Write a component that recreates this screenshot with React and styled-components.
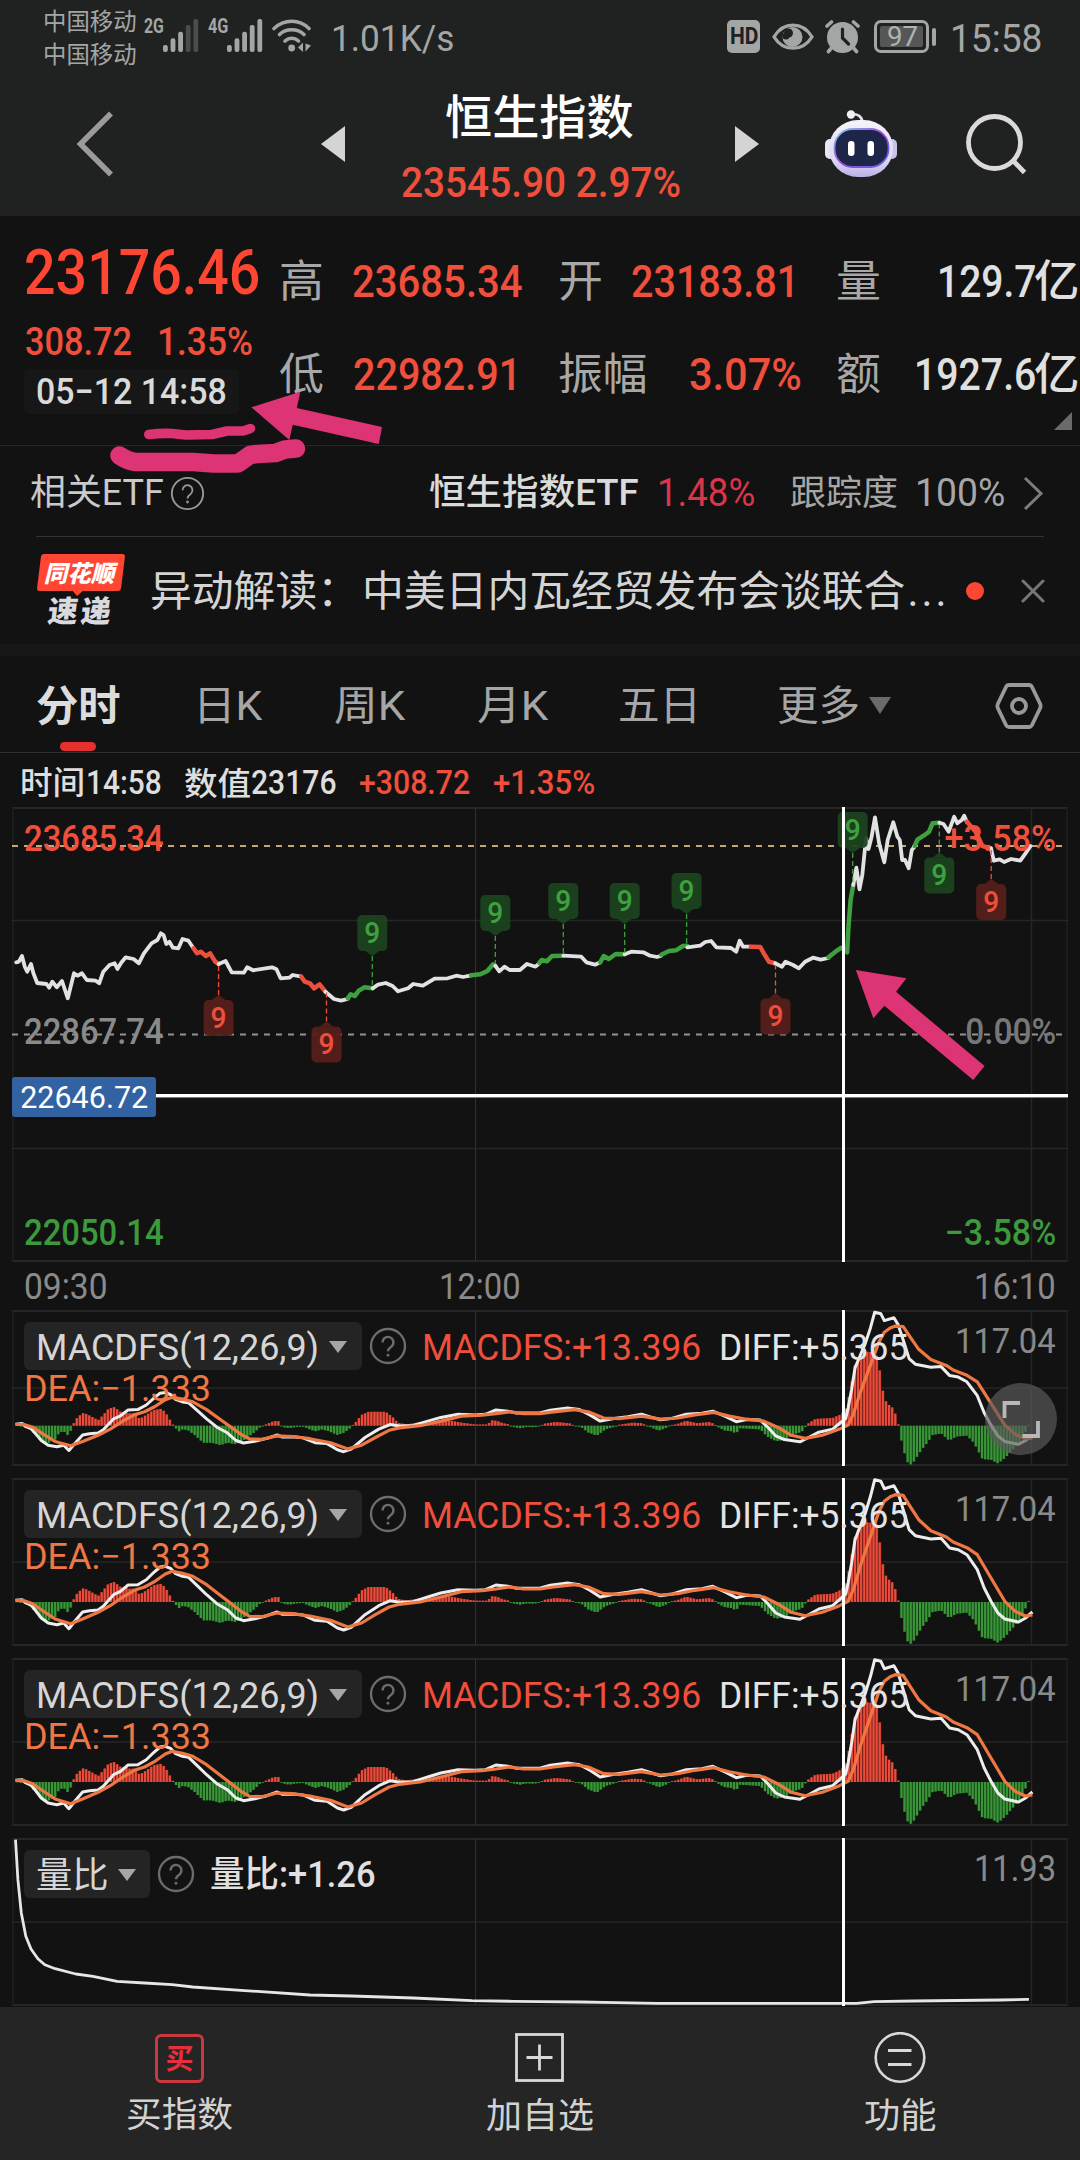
import React, { useLayoutEffect, useRef, useState } from "react";
import styled, { createGlobalStyle } from "styled-components";

const RED = "#f04f3c";
const GREEN = "#3c9a3c";
const PINK = "#dc3474";
const FONT = `Roboto, "Noto Sans CJK SC", sans-serif`;

const GlobalStyle = createGlobalStyle`
  * {
    box-sizing: border-box;
  }
  body {
    margin: 0;
    background: #121212;
    font-family: ${FONT};
  }
  svg {
    display: block;
    flex: none;
  }
`;

const Page = styled.div`
  position: relative;
  width: 1080px;
  height: 2160px;
  overflow: hidden;
  display: flex;
  flex-direction: column;
  background: #121212;
`;

/* ---------- text fitted to a given width ---------- */

const FitBox = styled.span`
  display: block;
  flex: none;
  width: ${(p) => p.$w + p.$size * 0.1}px;
  margin-left: ${(p) => (p.$ml || 0) - p.$size * 0.05}px;
  margin-right: ${(p) => (p.$mr || 0) - p.$size * 0.05}px;
  margin-top: ${(p) => p.$mt || 0}px;
  color: ${(p) => p.$color};
  font-size: ${(p) => p.$size}px;
  font-weight: ${(p) => p.$weight};
  line-height: 1.2;
  white-space: pre;
`;

const FitInner = styled.span`
  display: inline-block;
  transform-origin: 0 50%;
`;

function Fit({ w, size, weight = 500, color = RED, ml, mr, mt, children }) {
  const ref = useRef(null);
  const [scale, setScale] = useState(1);

  useLayoutEffect(() => {
    setScale((w + size * 0.1) / ref.current.offsetWidth);
  }, [w, size, children]);

  return (
    <FitBox
      $w={w}
      $size={size}
      $weight={weight}
      $color={color}
      $ml={ml}
      $mr={mr}
      $mt={mt}
    >
      <FitInner ref={ref} style={{ transform: `scaleX(${scale})` }}>
        {children}
      </FitInner>
    </FitBox>
  );
}

/* ---------- header ---------- */

const Header = styled.header`
  height: 216px;
  flex: none;
  background: #202221;
`;

const StatusBar = styled.div`
  height: 74px;
  display: flex;
  align-items: flex-start;
  padding-left: 43px;
`;

const Carriers = styled.div`
  width: 102px;
  padding-top: 6px;
  color: #a4a6a5;
  font-size: 23.4px;
  line-height: 33px;
  white-space: nowrap;
`;

const StatusIcon = styled.svg`
  margin-left: ${(p) => p.$ml || 0}px;
  margin-top: 19px;
`;

const HdBadge = styled.div`
  width: 33px;
  height: 33px;
  margin: 20px 0 0 275px;
  border-radius: 5px;
  background: #a4a6a5;
  display: flex;
  align-items: center;
  justify-content: center;
`;

const Battery = styled.div`
  width: 55px;
  height: 33px;
  margin: 20px 0 0 13px;
  padding: 3px;
  border: 3px solid #a4a6a5;
  border-radius: 7px;
`;

const BatteryLevel = styled.div`
  height: 21px;
  border-radius: 2px;
  background: #555656;
  display: flex;
  align-items: center;
  justify-content: center;
`;

const BatteryNub = styled.div`
  width: 4px;
  height: 18px;
  margin: 27.5px 15px 0 3px;
  border-radius: 2px;
  background: #a4a6a5;
`;

const Nav = styled.nav`
  height: 142px;
  display: flex;
  align-items: center;
  padding: 0 0 2px 76px;
`;

const NavIcon = styled.svg`
  margin-left: ${(p) => p.$ml || 0}px;
`;

const TitleBlock = styled.div`
  width: 276px;
  margin-left: 58px;
  padding-top: 14px;
  display: flex;
  flex-direction: column;
  align-items: center;
`;

const TitleLine = styled.div`
  height: 63.5px;
  display: flex;
  align-items: center;
`;

/* ---------- quote ---------- */

const Quote = styled.section`
  position: relative;
  height: 230px;
  flex: none;
  display: flex;
  border-bottom: 1px solid #262626;
`;

const QuoteMain = styled.div`
  width: 281px;
  padding-top: 5px;
`;

const PriceLine = styled.div`
  height: ${(p) => p.$h}px;
  padding-left: 27px;
  display: flex;
  align-items: center;
`;

const DateTag = styled.div`
  width: 215px;
  height: 45px;
  margin: 9px 0 0 24px;
  padding-left: 14px;
  border-radius: 6px;
  background: #171717;
  display: flex;
  align-items: center;
`;

const StatGrid = styled.div`
  padding-top: 19px;
  display: grid;
  grid-template-columns: 240px 239px 239px;
  grid-auto-rows: 93px;
  column-gap: 39px;
`;

const Stat = styled.div`
  display: flex;
  align-items: center;
  justify-content: space-between;
`;

const StatValue = styled.div`
  display: flex;
  align-items: center;
`;

const Corner = styled.i`
  position: absolute;
  right: 8px;
  bottom: 15px;
  border-left: 18px solid transparent;
  border-bottom: 18px solid #6a6a6a;
`;

/* ---------- etf + news ---------- */

const EtfRow = styled.section`
  height: 90px;
  flex: none;
  display: flex;
  align-items: center;
  padding: 5px 0 0 32px;
`;

const Divider = styled.div`
  height: 1px;
  flex: none;
  margin: 0 36px;
  background: #333;
`;

const NewsRow = styled.section`
  height: 107px;
  flex: none;
  display: flex;
  align-items: center;
  padding-left: 37px;
`;

const Badge = styled.div`
  width: 88px;
  height: 74px;
  display: flex;
  flex-direction: column;
  align-items: center;
`;

const BadgeTop = styled.div`
  position: relative;
  width: 84px;
  height: 37px;
  flex: none;
  border-radius: 3px;
  background: #ff4632;
  transform: skewX(-7deg);
  display: flex;
  align-items: center;
  justify-content: center;

  &::after {
    content: "";
    position: absolute;
    top: 36px;
    left: 35px;
    border: 6px solid transparent;
    border-top-color: #ff4632;
  }
`;

const BadgeText = styled.span`
  margin-top: ${(p) => p.$mt || 0}px;
  color: ${(p) => p.$color || "#fff"};
  font-size: ${(p) => p.$size}px;
  font-weight: 900;
  line-height: 34px;
  letter-spacing: ${(p) => p.$gap || 0}px;
  transform: skewX(-7deg);
`;

const NewsText = styled.p`
  width: 808px;
  flex: none;
  margin: 3px 0 0 25px;
  color: #d4d4d4;
  font-size: 41.8px;
  line-height: 60px;
  white-space: nowrap;
`;

const Headline = styled.span`
  margin-left: 3px;
`;

const Dots = styled.span`
  margin-left: 2px;
  letter-spacing: 3px;
`;

const RedDot = styled.i`
  width: 18px;
  height: 18px;
  flex: none;
  margin: 0 37px 0 8px;
  border-radius: 50%;
  background: #ff4632;
`;

const Band = styled.div`
  height: 12px;
  flex: none;
  background: #171717;
`;

/* ---------- tabs ---------- */

const Tabs = styled.section`
  height: 97px;
  flex: none;
  display: flex;
  align-items: center;
  padding: 5px 0 0 38px;
  border-bottom: 1px solid #303030;
`;

const Tab = styled.div`
  position: relative;
  display: flex;
  align-items: center;
  margin-left: ${(p) => p.$ml || 0}px;

  &::after {
    content: "";
    display: ${(p) => (p.$active ? "block" : "none")};
    position: absolute;
    top: 61px;
    left: 22px;
    width: 36px;
    height: 9px;
    border-radius: 5px;
    background: #e5302f;
  }
`;

const Caret = styled.i`
  margin-left: ${(p) => p.$ml}px;
  margin-bottom: 3px;
  border: solid transparent;
  border-width: ${(p) => p.$h}px ${(p) => p.$half}px 0;
  border-top-color: ${(p) => p.$color};
`;

const InfoRow = styled.section`
  height: 54px;
  flex: none;
  display: flex;
  align-items: center;
  padding: 7px 0 0 22px;
`;

/* ---------- charts ---------- */

const MainChart = styled.svg`
  width: 1080px;
  height: 455px;
`;

const TimeAxis = styled.div`
  height: 48px;
  flex: none;
  display: flex;
  align-items: center;
  padding: 2px 0 0 26px;
`;

const Panel = styled.section`
  flex: none;
  height: ${(p) => p.$h}px;
  margin-bottom: 12px;
  display: grid;
  grid-template: 1fr / 1fr;

  & > * {
    grid-area: 1 / 1;
  }
`;

const Legend = styled.div`
  padding: 12px 25px 0 24px;
`;

const LegendRow = styled.div`
  height: 48px;
  display: flex;
  align-items: center;
`;

const Selector = styled.div`
  width: ${(p) => p.$w}px;
  height: 48px;
  padding: 4px 0 0 14px;
  border-radius: 6px;
  background: #242424;
  display: flex;
  align-items: center;
`;

const PanelMax = styled.div`
  margin: -9px 1px 0 auto;
`;

const ExpandButton = styled.button`
  position: absolute;
  left: 985px;
  top: 1383px;
  width: 72px;
  height: 72px;
  padding: 0;
  border: 0;
  border-radius: 50%;
  background: rgba(92, 92, 92, 0.68);
`;

const Overlay = styled.svg`
  position: absolute;
  left: 0;
  top: 0;
  pointer-events: none;
`;

/* ---------- bottom bar ---------- */

const BottomBar = styled.footer`
  position: absolute;
  left: 0;
  right: 0;
  bottom: 0;
  height: 153px;
  background: #252525;
  display: grid;
  grid-template-columns: repeat(3, 1fr);
`;

const Action = styled.div`
  display: flex;
  flex-direction: column;
  align-items: center;
  padding-top: 25px;
`;

const ActionIcon = styled.div`
  height: 52px;
  margin-bottom: 11px;
`;

const BuyIcon = styled.div`
  width: 49px;
  height: 49px;
  margin: 2px 1px 0 0;
  border: 3px solid #c9393f;
  border-radius: 6px;
  color: #e5303f;
  font-size: 28px;
  font-weight: 700;
  line-height: 45px;
  text-align: center;
`;

/* ---------- data ---------- */

// points are stored on a fine grid: 2.904 units per px across, 3 units per px down
const UX = 2.904;
const path = (pts, y0) =>
  pts
    .map(([x, y], i) => `${i ? "L" : "M"}${(x / UX).toFixed(1)} ${(y0 + y / 3).toFixed(1)}`)
    .join("");

const PRICE = [
  ["w", [[47,487],[55,485],[64,468],[72,500],[79,515],[90,492],[97,520],[108,549],[135,552],[143,563],[152,545],[165,562],[180,543],[197,595],[215,520],[225,527],[238,520],[252,540],[278,542],[288,550],[300,515],[318,495],[333,490],[341,507],[352,488],[365,472],[388,477],[403,490],[418,460],[440,430],[457,420],[467,400],[475,405],[483,432],[492,425],[502,443],[518,445],[530,417],[547,422],[562,445]]],
  ["r", [[562,445],[572,460],[583,455],[598,468],[610,460],[625,485],[635,492]]],
  ["w", [[635,492],[655,483],[673,517],[708,518],[718,502],[735,511],[790,502],[803,508],[815,535],[840,533],[850,525],[875,530]]],
  ["r", [[875,530],[885,545],[900,550],[912,565],[928,553],[945,575]]],
  ["w", [[945,575],[970,597],[990,602],[1010,597]]],
  ["g", [[1010,595],[1018,583],[1030,588],[1042,572],[1058,562],[1082,565]]],
  ["w", [[1082,565],[1098,554],[1120,549],[1140,558],[1156,574],[1185,565],[1200,552],[1228,557],[1262,536],[1300,535],[1325,527],[1345,531],[1368,526]]],
  ["g", [[1368,526],[1395,523],[1415,513],[1432,493],[1438,497]]],
  ["w", [[1438,497],[1450,514],[1465,500],[1480,510],[1510,510],[1530,492],[1555,500],[1566,490]]],
  ["g", [[1566,488],[1573,480],[1588,484],[1603,468],[1636,467]]],
  ["w", [[1636,467],[1688,470],[1703,487],[1728,494],[1743,487]]],
  ["g", [[1743,487],[1753,468],[1768,477],[1788,462],[1814,463]]],
  ["w", [[1814,463],[1833,455],[1868,457],[1888,467],[1908,471],[1920,467]]],
  ["g", [[1920,464],[1943,453],[1963,451],[1983,438],[1996,437]]],
  ["w", [[1996,442],[2033,437],[2048,426],[2065,423],[2080,442],[2123,444],[2138,455],[2148,422],[2158,440],[2180,440]]],
  ["r", [[2180,440],[2208,441],[2218,460],[2233,485],[2251,490]]],
  ["w", [[2251,490],[2271,500],[2281,485],[2303,495],[2320,505],[2338,485],[2361,473],[2383,479],[2406,474]]],
  ["g", [[2406,472],[2426,455],[2443,443],[2460,457],[2464,380],[2470,300],[2478,255]]],
  ["w", [[2478,255],[2487,203],[2496,268],[2504,225],[2515,115],[2522,147],[2531,110],[2541,52],[2553,130],[2568,187],[2578,120],[2594,67],[2606,110],[2613,120],[2620,180],[2628,180],[2639,205],[2648,150],[2656,140]]],
  ["g", [[2656,138],[2665,118],[2688,103],[2698,95],[2708,70],[2728,68]]],
  ["w", [[2728,68],[2740,72],[2755,95],[2771,50],[2780,70],[2793,60],[2800,47],[2808,66]]],
  ["r", [[2808,65],[2833,95],[2853,138],[2878,145]]],
  ["w", [[2878,145],[2886,182],[2903,178],[2916,186],[2936,177],[2963,182],[2978,160],[2993,138]]],
];

const LINE_COLOR = { w: "#e2e2e2", r: "#ee4f3c", g: "#3fa03f" };

// x, tip y, line end y, up = box above the tip
const MARKERS = [
  { x: 372.3, tip: 956, end: 986, up: true, c: "g" },
  { x: 495.3, tip: 936, end: 963, up: true, c: "g" },
  { x: 563.3, tip: 924, end: 954, up: true, c: "g" },
  { x: 624.7, tip: 924, end: 953, up: true, c: "g" },
  { x: 686.6, tip: 914, end: 944, up: true, c: "g" },
  { x: 852.7, tip: 853, end: 885, up: true, c: "g" },
  { x: 939.3, tip: 852.5, end: 825, up: false, c: "g" },
  { x: 218.6, tip: 995, end: 965, up: false, c: "r" },
  { x: 326.5, tip: 1021.5, end: 992, up: false, c: "r" },
  { x: 775.5, tip: 993.5, end: 966, up: false, c: "r" },
  { x: 991.2, tip: 879, end: 850, up: false, c: "r" },
];

const DIFF = [[45,-5],[65,-7],[72,1],[90,9],[105,28],[120,48],[140,63],[165,68],[185,63],[200,80],[215,61],[240,30],[260,26],[285,24],[300,13],[330,-22],[350,-32],[372,-51],[400,-52],[425,-67],[447,-89],[465,-105],[480,-107],[495,-101],[510,-85],[530,-77],[548,-74],[575,-47],[600,-22],[630,5],[660,23],[685,48],[707,56],[740,50],[775,41],[805,30],[820,37],[850,36],[880,39],[915,55],[950,58],[980,78],[998,84],[1020,76],[1060,38],[1100,11],[1133,-4],[1160,1],[1200,-1],[1240,-14],[1280,-27],[1330,-37],[1380,-35],[1410,-37],[1440,-51],[1475,-47],[1500,-41],[1568,-41],[1598,-50],[1648,-57],[1683,-52],[1713,-35],[1743,-15],[1783,-23],[1823,-29],[1863,-37],[1893,-27],[1918,-19],[1953,-24],[1993,-37],[2038,-40],[2070,-47],[2108,-29],[2138,-13],[2168,-20],[2208,-18],[2228,3],[2253,33],[2278,45],[2323,52],[2348,38],[2378,21],[2418,11],[2438,-7],[2456,-24],[2463,-57],[2473,-117],[2483,-187],[2498,-227],[2513,-267],[2528,-317],[2540,-367],[2558,-362],[2568,-340],[2596,-349],[2608,-327],[2623,-277],[2640,-217],[2658,-199],[2703,-189],[2733,-191],[2758,-162],[2783,-157],[2808,-142],[2838,-97],[2858,-42],[2878,-2],[2898,33],[2918,51],[2958,60],[2978,48],[2998,30]];
const DEA = [[45,-4],[70,-4],[95,5],[120,23],[160,51],[205,65],[240,51],[285,31],[320,11],[360,-17],[390,-35],[420,-45],[450,-62],[480,-84],[500,-92],[530,-86],[560,-77],[600,-52],[650,-12],[700,28],[725,43],[760,44],[805,33],[850,35],[900,42],[960,55],[1010,75],[1050,63],[1090,38],[1130,15],[1160,7],[1220,0],[1280,-15],[1340,-31],[1400,-34],[1440,-39],[1480,-45],[1520,-39],[1568,-39],[1608,-45],[1668,-52],[1708,-45],[1753,-25],[1798,-23],[1863,-31],[1918,-21],[1968,-25],[2018,-35],[2073,-43],[2118,-31],[2168,-21],[2218,-15],[2258,5],[2298,31],[2338,41],[2388,31],[2438,11],[2463,-2],[2478,-37],[2498,-107],[2518,-167],[2538,-227],[2553,-272],[2568,-302],[2585,-316],[2600,-322],[2623,-320],[2643,-287],[2668,-247],[2703,-214],[2748,-195],[2768,-180],[2808,-163],[2838,-142],[2878,-72],[2918,-2],[2948,28],[2978,42],[2998,39]];
const HIST = [[60,0],[75,-3],[90,-15],[105,-33],[120,-52],[140,-56],[160,-45],[172,-22],[185,-18],[198,-32],[208,-10],[214,8],[225,28],[243,42],[265,30],[285,18],[300,35],[315,55],[332,60],[350,45],[375,40],[392,40],[405,22],[425,35],[445,50],[470,55],[485,35],[497,12],[503,2],[510,-8],[520,-18],[530,-12],[545,-14],[565,-30],[590,-55],[615,-55],[640,-63],[660,-55],[685,-60],[710,-45],[740,-20],[757,-3],[770,3],[795,15],[808,15],[815,0],[820,-4],[840,-8],[860,-4],[880,-3],[900,-12],[915,-18],[935,-12],[955,-18],[980,-30],[1000,-22],[1020,-5],[1030,8],[1050,35],[1070,45],[1120,45],[1140,28],[1155,10],[1180,4],[1210,10],[1240,8],[1260,12],[1300,18],[1340,10],[1380,4],[1415,4],[1430,18],[1445,15],[1460,8],[1475,5],[1485,-3],[1510,-8],[1530,-4],[1550,-5],[1568,-2],[1578,6],[1613,12],[1653,8],[1668,0],[1688,-5],[1708,-22],[1733,-32],[1758,-12],[1783,-4],[1798,3],[1838,10],[1863,8],[1883,-2],[1913,-16],[1933,-8],[1946,0],[1968,6],[1993,16],[2023,8],[2063,12],[2076,3],[2083,-3],[2103,-15],[2123,-18],[2138,-25],[2148,-8],[2178,-10],[2208,-12],[2228,-35],[2253,-50],[2278,-46],[2303,-28],[2328,-20],[2340,-2],[2348,8],[2368,22],[2418,25],[2438,35],[2450,45],[2458,60],[2468,110],[2478,170],[2486,215],[2498,220],[2513,240],[2528,238],[2543,235],[2551,210],[2558,150],[2568,85],[2583,65],[2596,55],[2604,20],[2610,0],[2618,-50],[2628,-95],[2638,-125],[2648,-125],[2663,-100],[2678,-75],[2693,-55],[2708,-30],[2733,-25],[2756,-48],[2778,-35],[2808,-32],[2828,-55],[2853,-108],[2878,-110],[2898,-122],[2918,-105],[2943,-75],[2968,-45],[2983,-5],[2990,8],[2998,18]];
const RATIO = [[45,5],[52,125],[62,225],[75,295],[90,333],[110,362],[130,380],[160,392],[220,408],[270,415],[340,430],[420,435],[500,440],[560,447],[700,457],[900,471],[1020,474],[1200,480],[1370,488],[1490,490],[1568,491],[1688,492],[1790,494],[1908,496],[2488,496],[2538,491],[2653,489],[2908,486],[2988,484]];

function histAt(x) {
  const i = HIST.findIndex((p) => p[0] >= x);
  if (i < 1) return 0;
  const [x0, v0] = HIST[i - 1];
  const [x1, v1] = HIST[i];
  return v0 + ((v1 - v0) * (x - x0)) / (x1 - x0);
}

// one bar per trading minute
const BARS = Array.from({ length: 326 }, (_, i) => {
  const x = 21 + i * 3.1;
  return { x, v: histAt(x * UX) / 3 };
}).filter((b) => b.x < 1033);

/* ---------- small drawings ---------- */

function Help({ r, ml, color, width }) {
  const s = r * 2 + 4;
  return (
    <NavIcon $ml={ml} width={s} height={s} viewBox="0 0 38 38" fill="none" stroke={color}>
      <circle cx="19" cy="19" r="17" strokeWidth={width} />
      <path d="M13.6 15.5a5.4 5.4 0 1 1 8.6 4.2c-2 1.4-3.2 2.3-3.2 4.6" strokeWidth={width} />
      <circle cx="19" cy="28.2" r="1.1" fill={color} strokeWidth="1" />
    </NavIcon>
  );
}

function Signal({ weak }) {
  const tops = [26, 19.3, 12.7, 6, 0];
  return (
    <StatusIcon width="36" height="33">
      {tops.map((y, i) => (
        <rect
          key={y}
          x={i * 7.6}
          y={y}
          width="4.8"
          height={33 - y}
          rx="2"
          fill={weak && i > 2 ? "#4b4c4c" : "#a4a6a5"}
        />
      ))}
    </StatusIcon>
  );
}

function Wifi() {
  return (
    <StatusIcon $ml={9} width="42" height="34" viewBox="0 0 42 34" fill="none" stroke="#a4a6a5" strokeWidth="3.6" strokeLinecap="round">
      <path d="M2 9.5C12-.2 27.5-.2 37 9.5" />
      <path d="M7.5 15.5c6.500-6.300 18-6.300 24.500 0" />
      <path d="M13 22c4-3.700 9.500-3.700 13.500 0" />
      <circle cx="19.7" cy="29" r="3.4" fill="#a4a6a5" stroke="none" />
      <path d="M31 23.500v9.500l-5-4.500zM33.500 24.500l5.500 2-5.500 6z" fill="#a4a6a5" stroke="none" />
    </StatusIcon>
  );
}

function Eye() {
  return (
    <StatusIcon $ml={12} width="42" height="34" viewBox="0 0 42 34">
      <path d="M2 17.8C11.5 2.3 30.5 2.3 40 17.8 30.5 33 11.5 33 2 17.8z" fill="none" stroke="#a4a6a5" strokeWidth="3.2" />
      <circle cx="20.5" cy="18" r="10" fill="#a4a6a5" />
      <circle cx="16.5" cy="14" r="4.5" fill="#202221" />
      <circle cx="14" cy="17" r="3.5" fill="#202221" />
    </StatusIcon>
  );
}

function Alarm() {
  return (
    <StatusIcon $ml={10} width="37" height="35" viewBox="0 0 37 35" fill="none" stroke="#a4a6a5" strokeWidth="3.6" strokeLinecap="round">
      <circle cx="18.5" cy="18.5" r="15.5" fill="#a4a6a5" stroke="none" />
      <path d="M3 7l4.500-4M34 7l-4.500-4M7 29.500l-2.500 3M30 29.500l2.500 3" />
      <path d="M18.5 10v9l6 6" stroke="#202221" strokeWidth="3.2" />
    </StatusIcon>
  );
}

function Robot() {
  return (
    <NavIcon $ml={66} width="72" height="68" viewBox="0 1 72 68">
      <defs>
        <linearGradient id="shell" x1="0" y1="0" x2="0" y2="1">
          <stop offset="0" stopColor="#f4f3fa" />
          <stop offset="0.7" stopColor="#dcd8f3" />
          <stop offset="1" stopColor="#b9b2e6" />
        </linearGradient>
        <linearGradient id="rim" x1="0" y1="0" x2="1" y2="1">
          <stop offset="0" stopColor="#7fd0f0" />
          <stop offset="0.5" stopColor="#a044d8" />
          <stop offset="1" stopColor="#5468e8" />
        </linearGradient>
      </defs>
      <path d="M26 5.500c7-1 11 2 11.500 8" fill="none" stroke="#e4e2ef" strokeWidth="2.6" />
      <circle cx="26" cy="5.500" r="4.2" fill="#f0eff6" />
      <rect x="0" y="30" width="10" height="20" rx="5" fill="#e8e6f4" />
      <rect x="62" y="30" width="10" height="20" rx="5" fill="#c9c3ec" />
      <rect x="4" y="11" width="64" height="57" rx="29" fill="url(#shell)" />
      <rect x="9.5" y="20" width="54" height="38" rx="18" fill="#1d2548" stroke="url(#rim)" strokeWidth="1.8" />
      <rect x="23" y="32" width="6.5" height="15" rx="3.2" fill="#fff" />
      <rect x="42.5" y="32" width="6.5" height="15" rx="3.2" fill="#fff" />
    </NavIcon>
  );
}

function Grid({ top, mid, bottom, mids = [mid] }) {
  return (
    <g stroke="#262626" strokeWidth="2">
      <path d={`M12 ${top}H1068M12 ${bottom}H1068`} />
      <path d={`M13 ${top}V${bottom}M1067 ${top}V${bottom}`} stroke="#1c1c1c" />
      {mids.map((y) => (
        <path key={y} d={`M12 ${y}H1068`} strokeWidth="1.5" />
      ))}
      <path d={`M475.5 ${top}V${bottom}`} stroke="#303030" strokeWidth="1" />
      <path d={`M1031.5 ${top}V${bottom}`} strokeWidth="1.5" />
    </g>
  );
}

function Marker({ x, tip, end, up, c }) {
  const s = up ? -1 : 1;
  const edge = tip + s * 5;
  const top = up ? edge - 36 : edge;
  return (
    <g>
      <path d={`M${x} ${tip}V${end}`} stroke={LINE_COLOR[c]} strokeWidth="1.3" strokeDasharray="5 3" />
      <g fill={c === "g" ? "#1c431f" : "#571f1a"} fillOpacity="0.95">
        <rect x={x - 15} y={top} width="30" height="36" rx="5" />
        <path d={`M${x - 7} ${edge}L${x} ${tip}L${x + 7} ${edge}z`} />
      </g>
      <text x={x} y={top + 27.5} textAnchor="middle" fontSize="29.5" fill={LINE_COLOR[c]} fontFamily={FONT} fontWeight="500" textLength="16" lengthAdjust="spacingAndGlyphs">
        9
      </text>
    </g>
  );
}

function ChartText({ x, y, w, color, size = 36, weight = 500, children }) {
  return (
    <text
      x={x - size * 0.05}
      y={y}
      textLength={w + size * 0.1}
      lengthAdjust="spacingAndGlyphs"
      fontSize={size}
      fontWeight={weight}
      fontFamily={FONT}
      fill={color}
    >
      {children}
    </text>
  );
}

function PriceChart() {
  return (
    <MainChart viewBox="0 807 1080 455">
      <Grid top={808} mids={[920.5, 1148.5]} bottom={1261} />
      <path d="M12 1034.5H1063" stroke="#929292" strokeWidth="2" strokeDasharray="6 6" />
      <path d="M12 846H1063" stroke="#c5a87a" strokeWidth="2" strokeDasharray="6 6" />
      <ChartText x={25.8} y={850.5} w={136} color={RED}>23685.34</ChartText>
      <ChartText x={25.8} y={1043.5} w={136} color="#8a8a8a">22867.74</ChartText>
      <ChartText x={25.8} y={1244.5} w={136} color={GREEN}>22050.14</ChartText>
      {PRICE.map(([c, pts], i) => (
        <path key={i} d={path(pts, 800)} fill="none" stroke={LINE_COLOR[c]} strokeWidth={c === "w" ? 3.8 : 4.5} strokeLinejoin="round" strokeLinecap="round" />
      ))}
      {MARKERS.map((m) => (
        <Marker key={m.x} {...m} />
      ))}
      <ChartText x={946.4} y={850.5} w={108} color={RED}>+3.58%</ChartText>
      <ChartText x={967} y={1043.5} w={87.5} color="#777">0.00%</ChartText>
      <ChartText x={946.4} y={1244.5} w={108} color={GREEN}>−3.58%</ChartText>
      <path d="M12 1097.5H1068" stroke="#777" />
      <path d="M12 1095.5H1068M843.5 807V1262" stroke="#fff" strokeWidth="3" />
      <rect x="12" y="1077" width="144" height="40" rx="3" fill="#3262a1" />
      <ChartText x={21.7} y={1108.3} w={125} size={31.5} weight={400} color="#fff">22646.72</ChartText>
    </MainChart>
  );
}

function MacdPanel({ h }) {
  const k = (h - 2) / 166;
  const zero = h === 156 ? 115.7 : 124;
  const scaled = (pts) => pts.map(([x, y]) => [x, y * k]);
  return (
    <Panel $h={h}>
      <svg width="1080" height={h}>
        <Grid top={1} mid={h / 2} bottom={h - 1} />
        {BARS.map(({ x, v }) => {
          const size = Math.max(Math.abs(v) * k, 0.8);
          const y = v > 0 ? zero - size : zero;
          return (
            <g key={x}>
              <rect x={x - 1.5} y={y} width="3.1" height={size} fill={v > 0 ? "#7e231c" : "#194f1a"} />
              <rect x={x - 1} y={y} width="2.1" height={size} fill={v > 0 ? "#ea4c3b" : "#3b963a"} />
            </g>
          );
        })}
        <path d={path(scaled(DIFF), zero)} fill="none" stroke="#ededed" strokeWidth="3" strokeLinejoin="round" />
        <path d={path(scaled(DEA), zero)} fill="none" stroke="#ee7743" strokeWidth="3.2" strokeLinejoin="round" />
        <path d={`M843.5 0V${h}`} stroke="#fff" strokeWidth="3" />
      </svg>
      <Legend>
        <LegendRow>
          <Selector $w={338}>
            <Fit w={279} size={37} weight={400} color="#d6d6d6" mt={1}>MACDFS(12,26,9)</Fit>
            <Caret $ml={12} $h={12} $half={9} $color="#a6a6a6" />
          </Selector>
          <Help r={17} ml={7} color="#6c6c6c" width={2.4} />
          <Fit w={275.5} size={37} weight={400} ml={17} mt={3.5}>MACDFS:+13.396</Fit>
          <Fit w={185.5} size={37} weight={400} color="#e4e4e4" ml={21.5} mt={3.5}>DIFF:+5.365</Fit>
          <PanelMax>
            <Fit w={97} size={35.5} weight={400} color="#8a8a8a">117.04</Fit>
          </PanelMax>
        </LegendRow>
        <Fit w={183.5} size={36.5} weight={400} color="#ee7743" ml={1.5} mt={-3.5}>DEA:−1.333</Fit>
      </Legend>
    </Panel>
  );
}

function VolumeRatioPanel() {
  return (
    <Panel $h={168}>
      <svg width="1080" height="168">
        <Grid top={1} mid={84} bottom={167} />
        <path d={path(RATIO, 0)} fill="none" stroke="#e6e6e6" strokeWidth="2.8" strokeLinejoin="round" />
        <path d="M843.5 0V168" stroke="#fff" strokeWidth="3" />
      </svg>
      <Legend>
        <LegendRow>
          <Selector $w={126}>
            <Fit w={69} size={36} weight={400} color="#d6d6d6" mt={1}>量比</Fit>
            <Caret $ml={11} $h={12} $half={9} $color="#a6a6a6" />
          </Selector>
          <Help r={17} ml={7} color="#6c6c6c" width={2.4} />
          <Fit w={162} size={36} color="#e0e0e0" ml={17} mt={3}>量比:+1.26</Fit>
          <PanelMax>
            <Fit w={78} size={36} weight={400} color="#8a8a8a">11.93</Fit>
          </PanelMax>
        </LegendRow>
      </Legend>
    </Panel>
  );
}

function StatItem({ label, labelW = 40.5, value, w, color, unit, mr }) {
  return (
    <Stat>
      <Fit w={labelW} size={44} weight={400} color="#a8a8a8" mt={1}>{label}</Fit>
      <StatValue>
        <Fit w={w} size={45} color={color} mr={mr}>{value}</Fit>
        {unit && <Fit w={41} size={44} color={color} ml={2} mt={1}>{unit}</Fit>}
      </StatValue>
    </Stat>
  );
}

export default function App() {
  return (
    <Page>
      <GlobalStyle />
      <Header>
        <StatusBar>
          <Carriers>
            中国移动
            <br />
            中国移动
          </Carriers>
          <Fit w={17.5} size={21} weight={700} color="#a4a6a5" mt={14}>2G</Fit>
          <Signal weak />
          <Fit w={18} size={21} weight={700} color="#a4a6a5" ml={11} mt={14}>4G</Fit>
          <Signal />
          <Wifi />
          <Fit w={120} size={37} weight={400} color="#a4a6a5" ml={18} mt={17}>1.01K/s</Fit>
          <HdBadge>
            <Fit w={26} size={23} weight={700} color="#202221">HD</Fit>
          </HdBadge>
          <Eye />
          <Alarm />
          <Battery>
            <BatteryLevel>
              <Fit w={28} size={27} weight={400} color="#b0b2b1" mt={1}>97</Fit>
            </BatteryLevel>
          </Battery>
          <BatteryNub />
          <Fit w={89} size={38} weight={400} color="#a4a6a5" mt={16.5}>15:58</Fit>
        </StatusBar>
        <Nav>
          <NavIcon width="38" height="66" fill="none" stroke="#9b9b9b" strokeWidth="5.5">
            <path d="M35 2.500L4.500 33 35 63.500" />
          </NavIcon>
          <NavIcon $ml={207} width="24" height="36">
            <path d="M24 0v36L0 18z" fill="#d4d4d4" />
          </NavIcon>
          <TitleBlock>
            <TitleLine>
              <Fit w={184} size={46.5} color="#fff" mr={3}>恒生指数</Fit>
            </TitleLine>
            <TitleLine>
              <Fit w={275.5} size={42}>23545.90 2.97%</Fit>
            </TitleLine>
          </TitleBlock>
          <NavIcon $ml={56} width="24" height="36">
            <path d="M0 0v36l24-18z" fill="#d4d4d4" />
          </NavIcon>
          <Robot />
          <NavIcon $ml={68} width="62" height="62" fill="none" stroke="#dadada" strokeWidth="4.8">
            <circle cx="29.5" cy="29.5" r="26" />
            <path d="M48 47.500l11.500 12" />
          </NavIcon>
        </Nav>
      </Header>

      <Quote>
        <QuoteMain>
          <PriceLine $h={103}>
            <Fit w={230} size={63} color="#ff4632">23176.46</Fit>
          </PriceLine>
          <PriceLine $h={36}>
            <Fit w={103.5} size={39}>308.72</Fit>
            <Fit w={92} size={39} ml={28.5}>1.35%</Fit>
          </PriceLine>
          <DateTag>
            <Fit w={187} size={36.5} color="#dadada" mt={1}>05−12 14:58</Fit>
          </DateTag>
        </QuoteMain>
        <StatGrid>
          <StatItem label="高" value="23685.34" w={166.5} />
          <StatItem label="开" value="23183.81" w={164} mr={2} />
          <StatItem label="量" value="129.7" w={95} color="#e0e0e0" unit="亿" />
          <StatItem label="低" value="22982.91" w={164} mr={2} />
          <StatItem label="振幅" labelW={85} value="3.07%" w={108} />
          <StatItem label="额" value="1927.6" w={117.5} color="#e0e0e0" unit="亿" />
        </StatGrid>
        <Corner />
      </Quote>

      <EtfRow>
        <Fit w={130} size={36} weight={400} color="#cacaca">相关ETF</Fit>
        <Help r={15.5} ml={7.5} color="#9a9a9a" width={2} />
        <Fit w={205.5} size={36} color="#dadada" ml={226.5}>恒生指数ETF</Fit>
        <Fit w={94.5} size={38} weight={400} color="#dc354a" ml={22}>1.48%</Fit>
        <Fit w={105} size={35.5} weight={400} color="#a6a6a6" ml={39}>跟踪度</Fit>
        <Fit w={86.5} size={38} weight={400} color="#a6a6a6" ml={19.5}>100%</Fit>
        <NavIcon $ml={20} width="22" height="36" fill="none" stroke="#7d7d7d" strokeWidth="3">
          <path d="M2 2l16 15.500L2 33" />
        </NavIcon>
      </EtfRow>
      <Divider />

      <NewsRow>
        <Badge>
          <BadgeTop>
            <BadgeText $size={23.5} $mt={2}>同花顺</BadgeText>
          </BadgeTop>
          <BadgeText $size={30} $gap={3} $mt={4} $color="#d9d9de">速递</BadgeText>
        </Badge>
        <NewsText>
          异动解读：<Headline>中美日内瓦经贸发布会谈联合</Headline>
          <Dots>...</Dots>
        </NewsText>
        <RedDot />
        <svg width="24" height="24" stroke="#777" strokeWidth="3" strokeLinecap="round">
          <path d="M2 2l20 20M22 2L2 22" />
        </svg>
      </NewsRow>
      <Band />

      <Tabs>
        <Tab $active>
          <Fit w={80.5} size={41.5} weight={700} color="#dcdcdc" mt={1}>分时</Fit>
        </Tab>
        <Tab $ml={77}>
          <Fit w={65.5} size={41} weight={400} color="#a6a6a6" mt={1}>日K</Fit>
        </Tab>
        <Tab $ml={75}>
          <Fit w={67.5} size={41} weight={400} color="#a6a6a6" mt={1}>周K</Fit>
        </Tab>
        <Tab $ml={75.5}>
          <Fit w={67.5} size={41} weight={400} color="#a6a6a6" mt={1}>月K</Fit>
        </Tab>
        <Tab $ml={73.5}>
          <Fit w={79} size={41} weight={400} color="#a6a6a6" mt={1}>五日</Fit>
        </Tab>
        <Tab $ml={80}>
          <Fit w={79} size={41} weight={400} color="#a6a6a6" mt={1}>更多</Fit>
          <Caret $ml={11} $h={17.5} $half={11} $color="#6a6a6a" />
        </Tab>
        <NavIcon $ml={104} width="48" height="48" fill="none" stroke="#999" strokeWidth="3.8" strokeLinejoin="round">
          <path d="M14 2h20q2 0 3 2l8 16.500q1.200 2.500 0 5L37 42q-1 2-3 2H14q-2 0-3-2L3 25.500q-1.200-2.500 0-5L11 4q1-2 3-2z" />
          <circle cx="24" cy="23" r="7" />
        </NavIcon>
      </Tabs>

      <InfoRow>
        <Fit w={62} size={31.5} color="#dedede" mt={1}>时间</Fit>
        <Fit w={72} size={32.5} color="#dedede" ml={4}>14:58</Fit>
        <Fit w={64} size={32} color="#dedede" ml={26} mt={1}>数值</Fit>
        <Fit w={82} size={32.5} color="#dedede" ml={3}>23176</Fit>
        <Fit w={107.5} size={32.5} ml={26}>+308.72</Fit>
        <Fit w={98.5} size={32.5} ml={26.5}>+1.35%</Fit>
      </InfoRow>

      <PriceChart />
      <TimeAxis>
        <Fit w={80} size={36.5} weight={400} color="#8a8a8a">09:30</Fit>
        <Fit w={78} size={36.5} weight={400} color="#8a8a8a" ml={335}>12:00</Fit>
        <Fit w={78} size={36.5} weight={400} color="#8a8a8a" ml={456.5}>16:10</Fit>
      </TimeAxis>

      <MacdPanel h={156} />
      <MacdPanel h={168} />
      <MacdPanel h={168} />
      <VolumeRatioPanel />

      <ExpandButton>
        <svg width="72" height="72" fill="none" stroke="#b8b8b8" strokeWidth="3.8">
          <path d="M19.500 35V20H35M53 38v15H37.500" />
        </svg>
      </ExpandButton>

      <BottomBar>
        <Action>
          <ActionIcon>
            <BuyIcon>买</BuyIcon>
          </ActionIcon>
          <Fit w={104} size={35.5} weight={400} color="#d2d2d2" mt={-1}>买指数</Fit>
        </Action>
        <Action>
          <ActionIcon>
            <svg width="52" height="52" fill="none" stroke="#d8d8d8" strokeWidth="2.8">
              <rect x="2.5" y="2.5" width="46" height="46" />
              <path d="M12.500 25.500h26M25.500 12.500v26" />
            </svg>
          </ActionIcon>
          <Fit w={105} size={35.5} weight={400} color="#d2d2d2">加自选</Fit>
        </Action>
        <Action>
          <ActionIcon>
            <svg width="52" height="52" fill="none" stroke="#d8d8d8" strokeWidth="2.6">
              <circle cx="26" cy="25.5" r="24.3" />
              <path d="M14 18.500h23.500M14 32.500h23.500" strokeWidth="3" />
            </svg>
          </ActionIcon>
          <Fit w={69} size={35.5} weight={400} color="#d2d2d2">功能</Fit>
        </Action>
      </BottomBar>

      <Overlay width="1080" height="2160" fill={PINK}>
        <path d="M251.4 407.3L300.3 391.7 296.8 408 382 427 378.8 444 292.7 424.7 289.3 440z" />
        <path d="M855.8 970L906.4 978.3 896 991.7 984.6 1066 973.2 1080 884.4 1005.7 873.3 1018.3z" />
        <g fill="none" stroke={PINK} strokeLinecap="round" strokeLinejoin="round">
          <path d="M148.8 434.5Q160 433 172 433.5L186 435 212 434.5 227 431 243 431 250.5 428.5" strokeWidth="9.5" />
          <path d="M119.5 455.5Q127 461 136 462H193L213.5 463.5H238L250 455 257 454 275.5 453 285 449.5 296 448.5" strokeWidth="18.5" />
        </g>
      </Overlay>
    </Page>
  );
}
